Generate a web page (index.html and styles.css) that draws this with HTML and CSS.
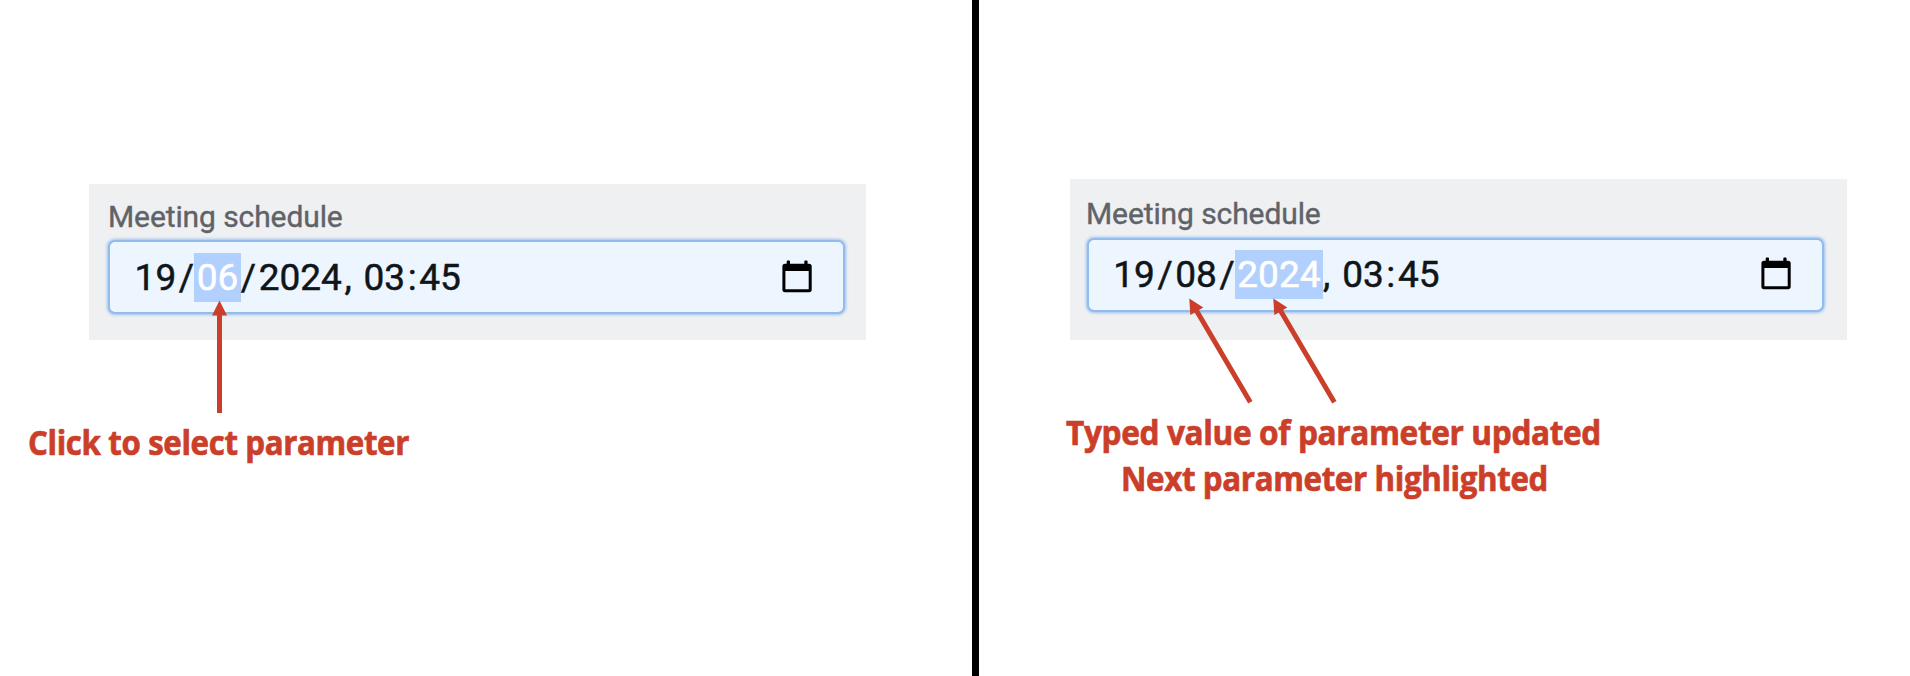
FILE: index.html
```html
<!DOCTYPE html>
<html lang="en">
<head>
<meta charset="utf-8">
<title>Meeting schedule</title>
<link rel="stylesheet" href="styles.css">
</head>
<body>
<main class="board">
  <section class="panel panel-before">
    <div class="card">
      <div class="label">Meeting schedule</div>
      <div class="input">
        <div class="value"><span class="field">19</span><span>/</span><span class="field selected">06</span><span>/</span><span class="field">2024</span><span class="sep">, </span><span class="field">03</span><span>:</span><span class="field">45</span></div>
        <svg class="calendar" width="30" height="33" viewBox="0 0 30 33"><path fill-rule="evenodd" d="M4.7 3.7V1.5Q4.7 .5 5.7 .5H7Q8 .5 8 1.5V3.7H22.3V1.5Q22.3 .5 23.3 .5H24.6Q25.6 .5 25.6 1.5V3.7H27Q29.7 3.7 29.7 6.4V29.5Q29.7 32.2 27 32.2H3Q.4 32.2 .4 29.5V6.4Q.4 3.7 3 3.7ZM3.4 11V29.3H26.7V11Z"/></svg>
      </div>
    </div>
    <svg class="notes" width="972" height="676" viewBox="0 0 972 676">
      <path d="M219.5 300.5L227 315.5H222V413H217V315.5H212Z"/>
      <text x="28" y="455" textLength="381" lengthAdjust="spacingAndGlyphs">Click to select parameter</text>
    </svg>
  </section>
  <div class="divider"></div>
  <section class="panel panel-after">
    <div class="card">
      <div class="label">Meeting schedule</div>
      <div class="input">
        <div class="value"><span class="field">19</span><span>/</span><span class="field">08</span><span>/</span><span class="field selected">2024</span><span class="sep">, </span><span class="field">03</span><span>:</span><span class="field">45</span></div>
        <svg class="calendar" width="30" height="33" viewBox="0 0 30 33"><path fill-rule="evenodd" d="M4.7 3.7V1.5Q4.7 .5 5.7 .5H7Q8 .5 8 1.5V3.7H22.3V1.5Q22.3 .5 23.3 .5H24.6Q25.6 .5 25.6 1.5V3.7H27Q29.7 3.7 29.7 6.4V29.5Q29.7 32.2 27 32.2H3Q.4 32.2 .4 29.5V6.4Q.4 3.7 3 3.7ZM3.4 11V29.3H26.7V11Z"/></svg>
      </div>
    </div>
    <svg class="notes" width="931" height="676" viewBox="979 0 931 676">
      <path d="M1189.3 298.5L1203.3 307.5L1199 310L1252.5 401L1248.2 403.6L1194.7 312.5L1190.3 315Z"/>
      <path d="M1273.3 298.5L1287.3 307.5L1283 310L1336.5 401L1332.2 403.6L1278.7 312.5L1274.3 315Z"/>
      <text x="1066" y="445" textLength="535" lengthAdjust="spacingAndGlyphs">Typed value of parameter updated</text>
      <text x="1121" y="490.7" textLength="427" lengthAdjust="spacingAndGlyphs">Next parameter highlighted</text>
    </svg>
  </section>
</main>
</body>
</html>
```
FILE: styles.css
```css
* { box-sizing: border-box; }
body { margin: 0; background: #fff; font-family: Roboto, "Liberation Sans", sans-serif; }
.board { display: flex; width: 1910px; height: 676px; overflow: hidden; }
.panel { position: relative; }
.panel-before { width: 972px; padding: 184px 0 0 89px; }
.panel-after { width: 931px; padding: 179px 0 0 91px; }
.divider { width: 7px; background: #000; }
.card { width: 777px; background: #eff0f2; }
.panel-before .card { height: 156px; padding: 14px 21px 0 19px; }
.panel-after .card { height: 161px; padding: 17px 23px 0 17px; }
.label {
  height: 42px; line-height: 36px; font-size: 30px; letter-spacing: -0.1px;
  color: #5f6368; white-space: nowrap; -webkit-text-stroke: 0.4px #5f6368;
}
.panel-before .label { padding-top: 1px; }
.panel-after .label { margin-left: -1px; }
.input {
  display: flex; align-items: center; justify-content: space-between;
  height: 74px; padding: 0 31px 0 22px;
  border: 2px solid #92bbee; border-radius: 7px; background: #edf5ff;
  box-shadow: 0 0 3px 1px #9cc2f4;
}
.panel-after .input { padding: 0 31px 1px 21.6px; }
.value {
  display: flex; font-size: 37px; line-height: 49px; color: #101518;
  white-space: pre; -webkit-text-stroke: 0.5px currentColor;
}
.field { padding: 0 2.6px; }
.selected { background: #b1d0fd; color: #fff; }
.calendar { display: block; margin-top: -2px; }
.notes { position: absolute; top: 0; left: 0; fill: #cb3f2a; font: 700 34px "Open Sans", "Noto Sans", sans-serif; }
.notes text { letter-spacing: -0.4px; stroke: #cb3f2a; stroke-width: 0.7px; }
```
